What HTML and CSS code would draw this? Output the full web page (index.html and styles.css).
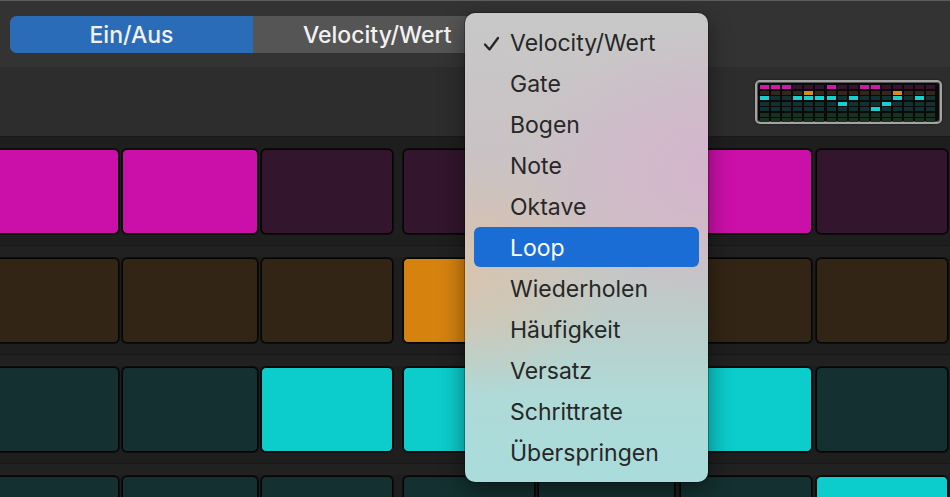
FILE: index.html
```html
<!DOCTYPE html>
<html lang="de">

<head>
    <meta charset="utf-8" />
    <title>Step Sequencer</title>
    <link rel="stylesheet" href="styles.css">
</head>

<body>
    <div class="app">
        <div class="topbar">
            <div class="segmented">
                <span class="seg active">Ein/Aus</span>
                <span class="seg">Velocity/Wert</span>
            </div>
        </div>
        <div class="toolbar">
            <div class="overview">
                <div id="mini" class="mini"></div>
            </div>
        </div>
        <div class="rows">
            <div class="row magenta">
                <div class="cell on"></div>
                <div class="cell on"></div>
                <div class="cell"></div>
                <div class="cell"></div>
                <div class="cell"></div>
                <div class="cell on"></div>
                <div class="cell"></div>
            </div>
            <div class="row orange">
                <div class="cell"></div>
                <div class="cell"></div>
                <div class="cell"></div>
                <div class="cell on"></div>
                <div class="cell"></div>
                <div class="cell"></div>
                <div class="cell"></div>
            </div>
            <div class="row cyan">
                <div class="cell"></div>
                <div class="cell"></div>
                <div class="cell on"></div>
                <div class="cell on"></div>
                <div class="cell"></div>
                <div class="cell on"></div>
                <div class="cell"></div>
            </div>
            <div class="row cyan">
                <div class="cell"></div>
                <div class="cell"></div>
                <div class="cell"></div>
                <div class="cell"></div>
                <div class="cell"></div>
                <div class="cell"></div>
                <div class="cell on"></div>
            </div>
        </div>

        <div class="menu">
            <div class="item checked">
                <svg class="check" width="17" height="16" viewBox="0 0 17 16">
                    <polyline points="2,8.5 6.5,13.5 15,2" fill="none" stroke="#262626" stroke-width="2.3"
                        stroke-linecap="round" stroke-linejoin="round" />
                </svg>
                Velocity/Wert
            </div>
            <div class="item">Gate</div>
            <div class="item">Bogen</div>
            <div class="item">Note</div>
            <div class="item">Oktave</div>
            <div class="item selected">Loop</div>
            <div class="item">Wiederholen</div>
            <div class="item">Häufigkeit</div>
            <div class="item">Versatz</div>
            <div class="item">Schrittrate</div>
            <div class="item">Überspringen</div>
        </div>
    </div>
    <script type="text/javascript">
        // 16 steps x 7 rows, "1" = step is on
        const pattern = [
            ["m", "1110001001100000"],
            ["o", "0000100000001000"],
            ["c", "1001111010001010"],
            ["c", "0000000100010000"],
            ["c", "0000000000100000"],
            ["g", "0000000000000000"],
            ["g", "0000000000000000"]
        ];
        const mini = document.getElementById("mini");
        mini.innerHTML = pattern.map(row => {
            return row[1].split("").map(s => {
                return `<span class="dot ${row[0]}${s == "1" ? " on" : ""}"></span>`;
            }).join("");
        }).join("");
    </script>
</body>

</html>
```

FILE: styles.css
```css
body {
    margin: 0;
    background-color: #1e1e1e;
    font-family: Inter, "Liberation Sans", sans-serif;
}

.app {
    position: relative;
    width: 950px;
    height: 497px;
    overflow: hidden;
    background-color: #1e1e1e;
}

.topbar {
    height: 67px;
    border-top: 1px solid #5e5e5e;
    background-color: #333333;
    padding: 15px 0 0 10px;
    box-sizing: border-box;
}

.segmented {
    display: flex;
    width: 500px;
    height: 37px;
    border-radius: 7px;
    overflow: hidden;
    background-color: #555555;
}

.seg {
    flex: 0 0 243px;
    display: flex;
    align-items: center;
    justify-content: center;
    color: #f2f2f2;
    font-size: 23px;
    font-weight: 500;
    padding-top: 1px;
}

.seg.active {
    background-color: #2b6cb9;
}

.seg+.seg {
    flex: 1;
    justify-content: flex-start;
    padding-left: 50px;
}

.toolbar {
    height: 69px;
    background-color: #2d2d2d;
    display: flex;
    justify-content: flex-end;
    align-items: flex-start;
    padding: 13px 8px 0 0;
    box-sizing: border-box;
}

.overview {
    width: 187px;
    height: 44px;
    box-sizing: border-box;
    border: 2px solid #a3a3a3;
    border-radius: 5px;
    box-shadow: 0 0 0 1px #555 inset, 0 0 2px rgba(0, 0, 0, .6);
    background-color: #0a0a0a;
    padding: 3px 2px 0 3px;
    overflow: hidden;
}

.mini {
    display: grid;
    grid-template-columns: repeat(16, 9px);
    grid-auto-rows: 4px;
    column-gap: 2.1px;
    row-gap: 1.5px;
}

.dot.m {
    background-color: #37122f;
}

.dot.m.on {
    background-color: #d018ab;
}

.dot.o {
    background-color: #33261a;
}

.dot.o.on {
    background-color: #dc8a12;
}

.dot.c {
    background-color: #123232;
}

.dot.c.on {
    background-color: #14d0d0;
}

.dot.g {
    background-color: #173220;
}

.rows {
    display: flex;
    flex-direction: column;
}

.row {
    display: flex;
    height: 109px;
    box-sizing: border-box;
    padding-top: 12px;
    margin-left: -16px;
    border-top: 1px solid #181818;
    background: linear-gradient(#212121 0 11px, #1e1e1e 11px);
}

.row:first-child {
    border-top-color: #1a1a1a;
    background: #1e1e1e;
}

.cell {
    flex: 0 0 132px;
    height: 85px;
    margin-left: 3px;
    box-sizing: border-box;
    border: 1px solid #050505;
    border-radius: 5px;
    box-shadow: 0 0 0 1px rgba(0, 0, 0, .55);
}

.cell:nth-child(1) {
    flex-basis: 135px;
    margin-left: 0;
}

.cell:nth-child(2) {
    flex-basis: 136px;
}

.cell:nth-child(4) {
    margin-left: 10px;
}

.cell:nth-child(5) {
    flex-basis: 137px;
}

.cell:nth-child(6) {
    margin-left: 5px;
}

.cell:nth-child(7) {
    margin-left: 4px;
}

.magenta .cell {
    background-color: #33152d;
}

.magenta .cell.on {
    background-color: #cb10a9;
}

.orange .cell {
    background-color: #332516;
}

.orange .cell.on {
    background-color: #d5820f;
}

.cyan .cell {
    background-color: #143030;
}

.cyan .cell.on {
    background-color: #0dcccc;
}

/* popup menu over the grid */
.menu {
    position: absolute;
    left: 465px;
    top: 13px;
    width: 243px;
    box-sizing: border-box;
    padding: 9px 9px;
    border-radius: 10px;
    background:
        radial-gradient(ellipse 180px 140px at 100% 33%, rgba(214, 178, 206, .85), rgba(214, 178, 206, 0)),
        radial-gradient(ellipse 150px 120px at 0% 56%, rgba(218, 196, 172, .9), rgba(218, 196, 172, 0)),
        linear-gradient(#c8c8c8 0%, #c9c3c6 25%, #cbc1c2 45%, #bccdc9 65%, #afdad8 82%, #a9dcdc 100%);
    box-shadow: 0 0 0 1px rgba(0, 0, 0, .25), 0 8px 24px rgba(0, 0, 0, .45);
}

.item {
    position: relative;
    height: 41px;
    display: flex;
    align-items: center;
    padding-left: 36px;
    padding-top: 1px;
    box-sizing: border-box;
    border-radius: 6px;
    color: #272727;
    font-size: 23px;
}

.item.selected {
    height: 40px;
    margin-bottom: 1px;
    background-color: #1a6dd5;
    color: #ffffff;
}

.check {
    position: absolute;
    left: 9px;
    top: 14px;
}
```
